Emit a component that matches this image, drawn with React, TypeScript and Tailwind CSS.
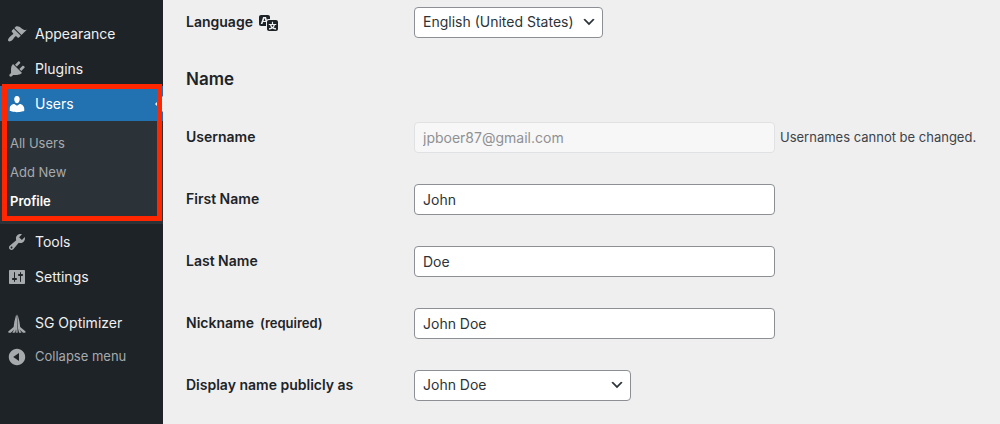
import { useState } from 'react';
import type { ReactNode } from 'react';
import clsx from 'clsx';

const ICONS = {
  appearance:
    'M14.48 11.06L7.41 3.99l1.5-1.5c.5-.56 2.3-.47 3.51.32 1.21.8 1.43 1.28 2.91 2.1 1.18.64 2.45 1.26 4.45.85zm-.71.71L6.7 4.7 4.93 6.47c-.39.39-.39 1.02 0 1.41l1.06 1.06c.39.39.39 1.03 0 1.42-.6.6-1.43 1.11-2.21 1.69-.35.26-.7.53-1.01.84C1.43 14.23.4 16.08 1.4 17.07c.99 1 2.84-.03 4.18-1.36.31-.31.58-.66.85-1.02.57-.78 1.08-1.61 1.69-2.21.39-.39 1.02-.39 1.41 0l1.06 1.06c.39.39 1.02.39 1.41 0z',
  plugins:
    'M13.11 4.36L9.87 7.6 8 5.73l3.24-3.24c.35-.34 1.05-.2 1.56.32.52.51.66 1.21.31 1.55zm-8 1.77l.91-1.12 9.01 9.01-1.19.84c-.71.71-2.63 1.16-3.82 1.16H6.14L4.9 17.26c-.59.59-1.54.59-2.12 0-.59-.58-.59-1.53 0-2.12l1.24-1.24v-3.88c0-1.13.4-3.19 1.09-3.89zm7.26 3.97l3.24-3.24c.34-.35 1.04-.21 1.55.31.52.51.66 1.21.31 1.55l-3.24 3.25z',
  users:
    'M10 9.25c-2.27 0-2.73-3.44-2.73-3.44C7 4.02 7.82 2 9.97 2c2.16 0 2.98 2.02 2.71 3.81 0 0-.41 3.44-2.68 3.44zm0 2.57L12.72 10c2.39 0 4.52 2.33 4.52 4.53v2.49s-3.65 1.13-7.24 1.13c-3.65 0-7.24-1.13-7.24-1.13v-2.49c0-2.25 1.94-4.48 4.47-4.48z',
  tools:
    'M16.68 9.77c-1.34 1.34-3.3 1.67-4.95.99l-5.41 6.52c-.99.99-2.59.99-3.58 0s-.99-2.59 0-3.57l6.52-5.42c-.68-1.65-.35-3.61.99-4.95 1.28-1.28 3.12-1.62 4.72-1.06l-2.89 2.89 2.82 2.82 2.86-2.87c.53 1.58.18 3.39-1.08 4.65zM3.81 16.21c.4.39 1.04.39 1.43 0 .4-.4.4-1.04 0-1.43-.39-.4-1.03-.4-1.43 0-.39.39-.39 1.03 0 1.43z',
  settings:
    'M18 16V4c0-.55-.45-1-1-1H3c-.55 0-1 .45-1 1v12c0 .55.45 1 1 1h14c.55 0 1-.45 1-1zM8 11h1c.55 0 1 .45 1 1s-.45 1-1 1H8v1.5c0 .28-.22.5-.5.5s-.5-.22-.5-.5V13H6c-.55 0-1-.45-1-1s.45-1 1-1h1V5.5c0-.28.22-.5.5-.5s.5.22.5.5V11zm5-2h-1c-.55 0-1-.45-1-1s.45-1 1-1h1V5.5c0-.28.22-.5.5-.5s.5.22.5.5V7h1c.55 0 1 .45 1 1s-.45 1-1 1h-1v5.5c0 .28-.22.5-.5.5s-.5-.22-.5-.5V9z',
  optimizer:
    'M9.2 1.6L7.4 8.6 6.6 14 1.2 18.6l.3 1.2h2.3l3.4-3.2-1.8 3.2h2.3l1-3.8 .9-12.4zM9.8 1l.1 18.8H9.1l.4-4.2-.9 4.2H8.4M10.6 1.6l1.8 7 .8 5.4 5.4 4.6-.3 1.2H16l-3.4-3.2 1.8 3.2h-2.3l-1-3.8-.9-12.4zM9.9 4l.8 15.8H9.2z',
  collapse:
    'M10 1.8c4.5 0 8.2 3.7 8.2 8.2s-3.7 8.2-8.2 8.2S1.8 14.5 1.8 10 5.5 1.8 10 1.8zm2 12.1V6.1L6.2 10z',
  translation:
    'M11 7H9.49c-.63 0-1.25.3-1.59.7L7 5H4.13l-2.39 7h1.69l.74-2H7v4H2c-1.1 0-2-.9-2-2V5c0-1.1.9-2 2-2h7c1.1 0 2 .9 2 2v2zM6.51 9H4.49l1-2.93zM10 8h7c1.1 0 2 .9 2 2v7c0 1.1-.9 2-2 2h-7c-1.1 0-2-.9-2-2v-7c0-1.1.9-2 2-2zm7.25 5v-1.08h-3.17V9.75h-1.16v2.17H9.75V13h1.28c.11.85.56 1.85 1.28 2.62-.87.36-1.89.62-2.31.62-.01.02.22.97.2 1.46.84 0 2.21-.5 3.28-1.15 1.09.65 2.48 1.15 3.34 1.15-.02-.49.2-1.44.2-1.46-.43 0-1.49-.27-2.38-.63.7-.77 1.14-1.77 1.25-2.61h1.36zm-3.81 1.93c-.5-.46-.85-1.13-1.01-1.93h2.09c-.17.8-.51 1.47-1 1.93l-.04.03s-.03-.02-.04-.03z',
  chevron: 'M5 6l5 5 5-5 2 1-7 7-7-7 2-1z',
};

const Icon = ({ name, className }: { name: keyof typeof ICONS; className?: string }) => (
  <svg viewBox="0 0 20 20" fill="currentColor" aria-hidden="true" className={clsx('shrink-0', className)}>
    <path d={ICONS[name]} />
  </svg>
);

interface MenuItemProps {
  icon: keyof typeof ICONS;
  label: string;
  active?: boolean;
}

const MenuItem = ({ icon, label, active }: MenuItemProps) => (
  <a
    href="#"
    className={clsx(
      'flex h-[35px] items-center gap-2 pl-[7px]',
      active ? 'bg-[#2271b1] text-white' : 'text-[#f0f0f1]',
    )}
  >
    <Icon name={icon} className={clsx('size-5', active ? 'text-white' : 'text-[#a7aaad]')} />
    {label}
  </a>
);

const SideMenu = () => (
  <nav className="w-[163px] shrink-0 bg-[#1d2327] pt-4 text-sm">
    <ul>
      <li>
        <MenuItem icon="appearance" label="Appearance" />
      </li>
      <li>
        <MenuItem icon="plugins" label="Plugins" />
      </li>
      <li className="relative">
        <MenuItem icon="users" label="Users" active />
        <span className="absolute top-[10px] right-0 border-y-8 border-r-8 border-y-transparent border-r-[#efefef]" />
        <ul className="bg-[#2c3338] py-2 text-[13px] text-[#a7aaad]">
          <li>
            <a href="#" className="flex h-[29px] items-center pl-[10px]">
              All Users
            </a>
          </li>
          <li>
            <a href="#" className="flex h-[29px] items-center pl-[10px]">
              Add New
            </a>
          </li>
          <li>
            <a href="#" className="flex h-[29px] items-center pl-[10px] font-semibold text-white">
              Profile
            </a>
          </li>
        </ul>
        {/* highlight frame */}
        <span className="pointer-events-none absolute -top-[2px] right-px bottom-[3px] left-[2px] border-[5px] border-[#ff2600]" />
      </li>
      <li>
        <MenuItem icon="tools" label="Tools" />
      </li>
      <li>
        <MenuItem icon="settings" label="Settings" />
      </li>
      <li className="mt-[11px]">
        <MenuItem icon="optimizer" label="SG Optimizer" />
      </li>
      <li>
        <button
          type="button"
          className="flex h-[33px] w-full items-center gap-2 pl-[7px] text-[13px] text-[#a7aaad]"
        >
          <Icon name="collapse" className="size-5" />
          Collapse menu
        </button>
      </li>
    </ul>
  </nav>
);

const Row = ({ id, label, children }: { id: string; label: ReactNode; children: ReactNode }) => (
  <div className="flex h-[62px] items-center">
    <label htmlFor={id} className="flex w-[228px] shrink-0 items-center gap-[6px] font-semibold">
      {label}
    </label>
    {children}
  </div>
);

const TextField = ({ id, initial }: { id: string; initial: string }) => {
  const [value, setValue] = useState(initial);
  return (
    <input
      id={id}
      type="text"
      value={value}
      onChange={(e) => setValue(e.target.value)}
      className="h-[31px] w-[361px] rounded border border-[#8c8f94] bg-white px-2 text-[#2c3338]"
    />
  );
};

const SelectField = ({ id, option, className }: { id: string; option: string; className: string }) => (
  <div className={clsx('relative', className)}>
    <select
      id={id}
      className="h-[31px] w-full appearance-none rounded border border-[#8c8f94] bg-white pr-6 pl-2 text-[#2c3338]"
    >
      <option>{option}</option>
    </select>
    <Icon name="chevron" className="pointer-events-none absolute top-[7px] right-[6px] size-4 text-[#2c3338]" />
  </div>
);

export default function App() {
  return (
    <div className="flex min-h-screen bg-[#efefef] font-['Inter','Liberation_Sans',sans-serif]">
      <SideMenu />
      <main className="-mt-[9px] min-w-0 flex-1 pl-[23px] text-sm text-[#1d2327]">
        <Row
          id="locale"
          label={
            <>
              Language
              <Icon name="translation" className="size-5" />
            </>
          }
        >
          <SelectField id="locale" option="English (United States)" className="w-[189px]" />
        </Row>
        <h2 className="flex h-[53px] items-center text-[17px] font-semibold">Name</h2>
        <Row id="username" label="Username">
          <input
            id="username"
            type="text"
            value="jpboer87@gmail.com"
            disabled
            className="h-[31px] w-[361px] shrink-0 rounded border border-[#e0e1e2] bg-[#f7f7f7] px-2 text-[#8f9194]"
          />
          <span className="ml-[5px] text-[13px] whitespace-nowrap text-[#3c434a]">
            Usernames cannot be changed.
          </span>
        </Row>
        <Row id="first_name" label="First Name">
          <TextField id="first_name" initial="John" />
        </Row>
        <Row id="last_name" label="Last Name">
          <TextField id="last_name" initial="Doe" />
        </Row>
        <Row
          id="nickname"
          label={
            <>
              Nickname <span className="text-[13px]">(required)</span>
            </>
          }
        >
          <TextField id="nickname" initial="John Doe" />
        </Row>
        <Row id="display_name" label="Display name publicly as">
          <SelectField id="display_name" option="John Doe" className="w-[217px]" />
        </Row>
      </main>
    </div>
  );
}
